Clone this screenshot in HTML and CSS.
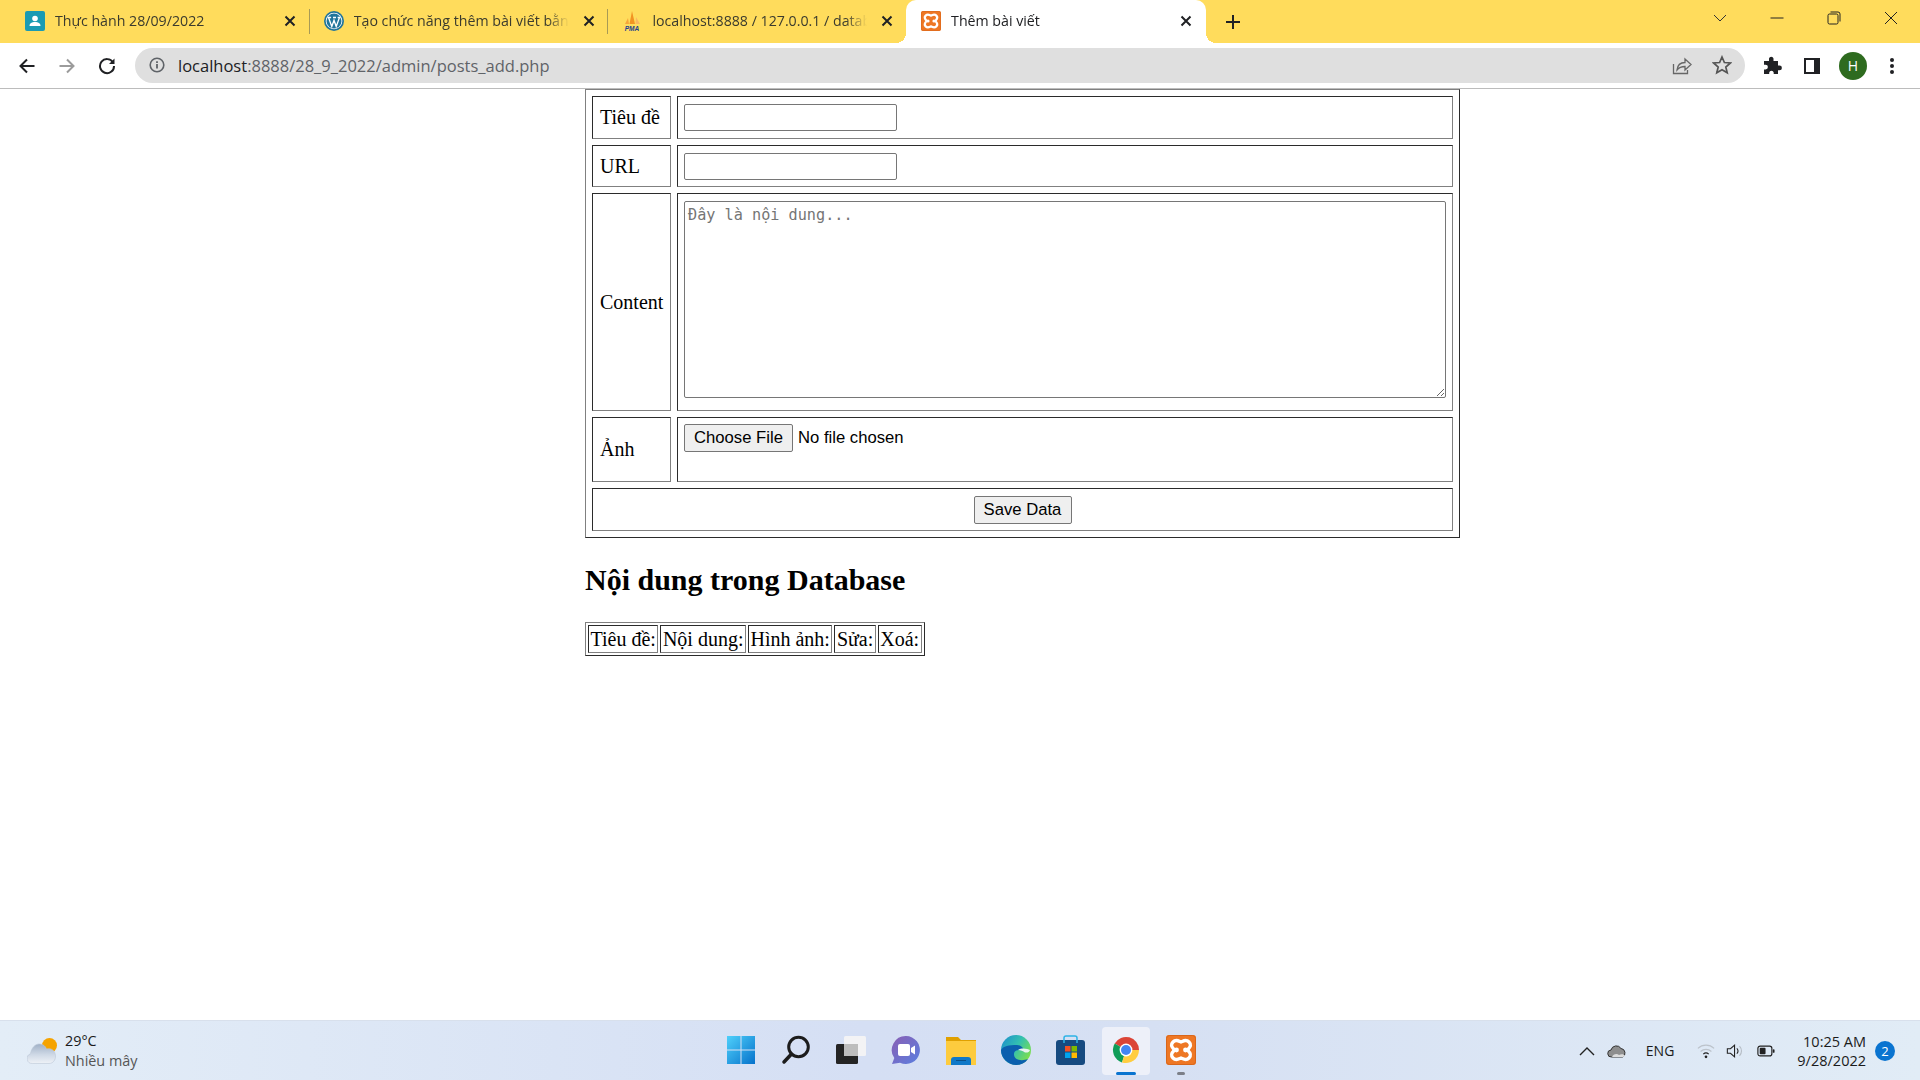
FILE: index.html
```html
<!DOCTYPE html>
<html lang="en">
<head>
    <meta charset="UTF-8">
    <meta name="viewport" content="width=device-width, initial-scale=1.0">
    <title>Thêm bài viết</title>
    <link rel="stylesheet" href="styles.css">
</head>
<body>
    <svg class="defs" width="0" height="0">
        <symbol id="xampp" viewBox="0 0 30 30">
            <rect width="30" height="30" rx="3" fill="#ee7724"/>
            <rect x="0.500" y="0.500" width="29" height="29" rx="3" fill="none" stroke="#d9661a"/>
            <path d="M7 7c3-3 5.500-1 8 0 2.500-1 5-3 8 0 3 3 1 5.500-1.500 8 2.500 2.500 4.500 5 1.500 8-3 3-5.500 1-8 0-2.500 1-5 3-8 0-3-3-1-5.500 1.500-8C6 12.500 4 10 7 7z" fill="#ee7724" stroke="#fff" stroke-width="3.400" stroke-linejoin="round"/>
            <circle cx="10.500" cy="15" r="2.400" fill="#fff"/>
            <circle cx="19.500" cy="15" r="2.400" fill="#fff"/>
        </symbol>
        <symbol id="close" viewBox="0 0 12 12">
            <path d="M1.500 1.500l9 9M10.500 1.500l-9 9" stroke="#202124" stroke-width="2" fill="none"/>
        </symbol>
    </svg>

    <div class="screen">
        <!-- tabs -->
        <div class="tabstrip">
            <div class="tab">
                <svg class="favicon" viewBox="0 0 20 20">
                    <rect width="20" height="20" rx="2" fill="#1a9bb3"/>
                    <circle cx="10" cy="7.500" r="2.800" fill="#fff"/>
                    <path d="M4.500 15c0-3 2.500-4 5.500-4s5.500 1 5.500 4z" fill="#fff"/>
                </svg>
                <span class="tab-title">Thực hành 28/09/2022</span>
                <svg class="tab-close"><use href="#close"/></svg>
            </div>
            <div class="tab tab-sep">
                <svg class="favicon" viewBox="0 0 20 20">
                    <circle cx="10" cy="10" r="10" fill="#21759b"/>
                    <circle cx="10" cy="10" r="8.300" fill="#fff"/>
                    <circle cx="10" cy="10" r="7.500" fill="#21759b"/>
                    <path d="M4.500 6.500l3.300 9 2.200-6.300 2.200 6.300 3.300-9M3.500 6.500h3.600M9 6.500h3M13.600 6.500h2.900" stroke="#fff" stroke-width="1.300" fill="none"/>
                </svg>
                <span class="tab-title">Tạo chức năng thêm bài viết bằng PHP</span>
                <svg class="tab-close"><use href="#close"/></svg>
            </div>
            <div class="tab tab-sep">
                <svg class="favicon" viewBox="0 0 20 20">
                    <path d="M3 13L6 7l1 6z" fill="#f7a63a"/>
                    <path d="M7.500 13L10 0l3 13z" fill="#f29422"/>
                    <path d="M13.500 13L14 6l4 7z" fill="#f9b860"/>
                    <text x="10" y="19.500" class="pma">PMA</text>
                </svg>
                <span class="tab-title">localhost:8888 / 127.0.0.1 / database</span>
                <svg class="tab-close"><use href="#close"/></svg>
            </div>
            <div class="tab tab-active">
                <svg class="favicon"><use href="#xampp"/></svg>
                <span class="tab-title">Thêm bài viết</span>
                <svg class="tab-close"><use href="#close"/></svg>
            </div>
            <svg class="new-tab" viewBox="0 0 16 16">
                <path d="M8 1v14M1 8h14" stroke="#202124" stroke-width="2"/>
            </svg>
            <div class="window-btns">
                <svg class="win-btn" viewBox="0 0 14 8">
                    <path d="M1 1l6 6 6-6" stroke="#333" fill="none"/>
                </svg>
                <svg class="win-btn" viewBox="0 0 14 14">
                    <path d="M0.500 7h13" stroke="#222" stroke-width="1"/>
                </svg>
                <svg class="win-btn" viewBox="0 0 14 14">
                    <rect x="1" y="3" width="10" height="10" rx="1.500" stroke="#222" fill="none"/>
                    <path d="M3.500 1h7.500a2 2 0 0 1 2 2v7.500" stroke="#222" fill="none"/>
                </svg>
                <svg class="win-btn" viewBox="0 0 14 14">
                    <path d="M1 1l12 12M13 1L1 13" stroke="#222" fill="none"/>
                </svg>
            </div>
        </div>

        <!-- address bar -->
        <div class="toolbar">
            <svg class="tool-icon" viewBox="0 0 18 18">
                <path d="M16.500 9H3M9 2.500L2.500 9 9 15.500" stroke="#202124" stroke-width="2" fill="none"/>
            </svg>
            <svg class="tool-icon" viewBox="0 0 18 18">
                <path d="M1.500 9H15M9 2.500L15.500 9 9 15.500" stroke="#9b9b9b" stroke-width="2" fill="none"/>
            </svg>
            <svg class="tool-icon" viewBox="0 0 18 18">
                <path d="M15 5.500A7 7 0 1 0 16 9" stroke="#202124" stroke-width="2" fill="none"/>
                <path d="M16.500 1.500v5.500H11z" fill="#202124"/>
            </svg>
            <div class="omnibox">
                <svg class="info-icon" viewBox="0 0 16 16">
                    <circle cx="8" cy="8" r="6.800" stroke="#5f6368" stroke-width="1.600" fill="none"/>
                    <path d="M8 7v4.500M8 4.200v1.700" stroke="#5f6368" stroke-width="1.800"/>
                </svg>
                <span class="url"><span class="url-host">localhost</span>:8888/28_9_2022/admin/posts_add.php</span>
                <svg class="omni-icon" viewBox="0 0 20 20">
                    <path d="M1.500 9v9.500h14V15" stroke="#666" stroke-width="1.300" fill="none"/>
                    <path d="M5 15c.5-5 4-7.500 8-7.500V4l6 5.500-6 5.500v-3.500c-3.500 0-6 1-8 3.500z" stroke="#666" stroke-width="1.300" fill="none"/>
                </svg>
                <svg class="omni-icon" viewBox="0 0 20 20">
                    <path d="M10 2l2.400 5.500 6 .5-4.600 4 1.400 5.800L10 14.800l-5.200 3 1.400-5.800-4.600-4 6-.5z" stroke="#555" stroke-width="1.700" fill="none"/>
                </svg>
            </div>
            <div class="tool-right">
                <svg class="ext-icon" viewBox="0 0 20 20">
                    <path d="M7 2.500a2.300 2.300 0 0 1 4.500 0V5h4.500v4.500h1.500a2.400 2.400 0 0 1 0 4.800H16V18h-4.300v-1.500a2.300 2.300 0 0 0-4.500 0V18H2v-4.500h1.500a2.400 2.400 0 0 0 0-4.800H2V5h5z" fill="#202124"/>
                </svg>
                <svg class="ext-icon" viewBox="0 0 20 20">
                    <rect x="2" y="2" width="16" height="16" fill="#202124"/>
                    <rect x="4" y="4" width="8" height="12" fill="#fff"/>
                </svg>
                <div class="avatar">H</div>
                <svg class="dots" viewBox="0 0 4 18">
                    <circle cx="2" cy="3" r="2" fill="#202124"/>
                    <circle cx="2" cy="9" r="2" fill="#202124"/>
                    <circle cx="2" cy="15" r="2" fill="#202124"/>
                </svg>
            </div>
        </div>

        <!-- page content -->
        <div class="page">
            <form class="post-form">
                <table class="form-table">
                    <tr class="row-title">
                        <td class="label-cell">Tiêu đề</td>
                        <td><input type="text" class="text-input"></td>
                    </tr>
                    <tr class="row-url">
                        <td class="label-cell">URL</td>
                        <td><input type="text" class="text-input"></td>
                    </tr>
                    <tr class="row-content">
                        <td class="label-cell">Content</td>
                        <td class="top-cell"><textarea class="content-input" placeholder="Đây là nội dung..."></textarea></td>
                    </tr>
                    <tr class="row-image">
                        <td class="label-cell">Ảnh</td>
                        <td class="top-cell"><input type="file" class="file-input"></td>
                    </tr>
                    <tr class="row-save">
                        <td colspan="2" class="save-cell"><input type="submit" class="save-btn" value="Save Data"></td>
                    </tr>
                </table>
            </form>

            <h2 class="db-title">Nội dung trong Database</h2>

            <table class="db-table">
                <tr>
                    <td>Tiêu đề:</td>
                    <td>Nội dung:</td>
                    <td>Hình ảnh:</td>
                    <td>Sửa:</td>
                    <td>Xoá:</td>
                </tr>
            </table>
        </div>

        <!-- windows taskbar -->
        <div class="taskbar">
            <div class="task-left">
                <svg class="weather-icon" viewBox="0 0 30 26">
                    <defs>
                        <linearGradient id="cloud" x1="0" y1="0" x2="0" y2="1">
                            <stop offset="0" stop-color="#9fb0c6"/>
                            <stop offset="0.550" stop-color="#cfd9e6"/>
                            <stop offset="1" stop-color="#eef2f7"/>
                        </linearGradient>
                    </defs>
                    <circle cx="22.500" cy="7.500" r="7.500" fill="#f5a300"/>
                    <path d="M5.500 25.500a5 5 0 0 1-2-9.700C4.500 9.500 8.500 5.500 13 6c3 .3 5.500 2 6.500 5 4.500-1 8.500 1 9 6.500.3 4.500-2.500 8-6.500 8z" fill="url(#cloud)" stroke="#bcc8d6" stroke-width="0.600"/>
                </svg>
                <div class="weather-text">
                    <div class="temp">29°C</div>
                    <div class="weather-desc">Nhiều mây</div>
                </div>
            </div>

            <div class="task-center">
                <div class="task-slot">
                    <svg class="task-icon" viewBox="0 0 30 30">
                        <defs>
                            <linearGradient id="win" x1="0" y1="0" x2="1" y2="1">
                                <stop offset="0" stop-color="#4fd0fb"/>
                                <stop offset="1" stop-color="#0672cb"/>
                            </linearGradient>
                        </defs>
                        <path d="M1 1h13.500v13.500H1zM15.500 1H29v13.500H15.500zM1 15.500h13.500V29H1zM15.500 15.500H29V29H15.500z" fill="url(#win)"/>
                    </svg>
                </div>
                <div class="task-slot">
                    <svg class="task-icon" viewBox="0 0 30 30">
                        <circle cx="17.500" cy="12" r="9.800" stroke="#1c1c1c" stroke-width="3" fill="none"/>
                        <path d="M10.500 19L3 27" stroke="#1c1c1c" stroke-width="3.500" stroke-linecap="round"/>
                    </svg>
                </div>
                <div class="task-slot">
                    <svg class="task-icon" viewBox="0 0 30 30">
                        <rect x="8" y="1" width="22" height="20" rx="1.500" fill="#f3f3f5"/>
                        <rect x="0" y="9" width="22" height="20" rx="1.500" fill="#242424"/>
                        <rect x="8" y="9" width="14" height="12" fill="#bdbdbd"/>
                    </svg>
                </div>
                <div class="task-slot">
                    <svg class="task-icon" viewBox="0 0 30 30">
                        <defs>
                            <linearGradient id="chat" x1="0" y1="0" x2="1" y2="1">
                                <stop offset="0" stop-color="#8a5fb4"/>
                                <stop offset="1" stop-color="#5a7fe0"/>
                            </linearGradient>
                        </defs>
                        <path d="M15 1a14 14 0 1 1-6 26.700L1 29l2.300-6A14 14 0 0 1 15 1z" fill="url(#chat)"/>
                        <rect x="7" y="9" width="12" height="12" rx="2" fill="#fff"/>
                        <path d="M20 13l4-2.500v9L20 17z" fill="#fff"/>
                    </svg>
                </div>
                <div class="task-slot">
                    <svg class="task-icon" viewBox="0 0 30 30">
                        <path d="M0 2h12l3 3h15v5H0z" fill="#e0a000"/>
                        <rect x="0" y="6" width="30" height="24" fill="#fdcb3e"/>
                        <path d="M5 30v-5a3 3 0 0 1 3-3h14a3 3 0 0 1 3 3v5z" fill="#0f78c8"/>
                        <rect x="10" y="25" width="10" height="1" fill="#0a4f88"/>
                    </svg>
                </div>
                <div class="task-slot">
                    <svg class="task-icon" viewBox="0 0 30 30">
                        <defs>
                            <linearGradient id="edge" x1="0" y1="0" x2="1" y2="0.600">
                                <stop offset="0" stop-color="#1a8bd0"/>
                                <stop offset="0.550" stop-color="#33c0b0"/>
                                <stop offset="1" stop-color="#7ade50"/>
                            </linearGradient>
                        </defs>
                        <circle cx="15" cy="15" r="15" fill="url(#edge)"/>
                        <path d="M0 15c0 8 7 15 15 15 5 0 9-2 12-6-5 2-13 2-14-4-.5-3 2-5 5-5 2 0 4 1 5 2 0-4-3-7-7-7C8 10 2 11 0 15z" fill="#0b5fae"/>
                        <path d="M17 15c2 0 5 1 6 2 2 1 5 1 6-2-2-1-8-3-12 0z" fill="#e8f4ee"/>
                    </svg>
                </div>
                <div class="task-slot">
                    <svg class="task-icon" viewBox="0 0 30 30">
                        <rect x="0" y="5" width="29" height="25" rx="3" fill="#164a80"/>
                        <path d="M8 8V3a2 2 0 0 1 2-2h9a2 2 0 0 1 2 2v5" stroke="#2eb3e6" stroke-width="1.500" fill="none"/>
                        <rect x="9" y="11" width="5.500" height="5.500" fill="#f25022"/>
                        <rect x="15.500" y="11" width="5.500" height="5.500" fill="#7fba00"/>
                        <rect x="9" y="17.500" width="5.500" height="5.500" fill="#00a4ef"/>
                        <rect x="15.500" y="17.500" width="5.500" height="5.500" fill="#ffb900"/>
                    </svg>
                </div>
                <div class="task-slot task-slot-active">
                    <svg class="task-icon" viewBox="0 0 30 30">
                        <path d="M15 15L3.700 8.500A13 13 0 0 1 28 15z" fill="#db4437"/>
                        <path d="M15 15L3.700 8.500A13 13 0 0 0 11 27.400z" fill="#0f9d58"/>
                        <path d="M15 15H28A13 13 0 0 1 11 27.400z" fill="#ffcd40"/>
                        <circle cx="15" cy="15" r="6.400" fill="#fff"/>
                        <circle cx="15" cy="15" r="5" fill="#4285f4"/>
                    </svg>
                    <div class="pip pip-blue"></div>
                </div>
                <div class="task-slot">
                    <svg class="task-icon"><use href="#xampp"/></svg>
                    <div class="pip pip-gray"></div>
                </div>
            </div>

            <div class="task-right">
                <svg class="tray-icon" viewBox="0 0 18 18">
                    <path d="M2 13l7-7 7 7" stroke="#222" stroke-width="1.400" fill="none"/>
                </svg>
                <svg class="tray-cloud" viewBox="0 0 20 14">
                    <path d="M4.500 13a3.500 3.500 0 0 1-.5-7 5.500 5.500 0 0 1 10-1.500A4.500 4.500 0 0 1 15.500 13z" fill="#8e8e8e" stroke="#333" stroke-width="1"/>
                    <path d="M5 13c1-3 5-4 7-2 2-1 5-1 6 1l-2 1z" fill="#dcdcdc"/>
                </svg>
                <span class="lang">ENG</span>
                <svg class="tray-icon wifi" viewBox="0 0 20 18">
                    <path d="M1 6a13 13 0 0 1 18 0" stroke="#bcc3cb" stroke-width="1.300" fill="none"/>
                    <path d="M4 9.500a9 9 0 0 1 12 0" stroke="#bcc3cb" stroke-width="1.300" fill="none"/>
                    <path d="M7 12.500a4.500 4.500 0 0 1 6 0" stroke="#222" stroke-width="1.300" fill="none"/>
                    <circle cx="10" cy="15.500" r="1.500" fill="#222"/>
                </svg>
                <svg class="tray-icon speaker" viewBox="0 0 20 18">
                    <path d="M1.500 6.500h3.500l4.500-4v13l-4.500-4H1.500z" stroke="#222" stroke-width="1.200" fill="none"/>
                    <path d="M12 6a4 4 0 0 1 0 6" stroke="#222" stroke-width="1.200" fill="none"/>
                    <path d="M15 3.500a8 8 0 0 1 0 11" stroke="#b5bcc4" stroke-width="1.200" fill="none"/>
                </svg>
                <svg class="tray-icon battery" viewBox="0 0 20 14">
                    <rect x="1" y="1.500" width="15.500" height="11" rx="2.500" stroke="#222" stroke-width="1.300" fill="none"/>
                    <rect x="3" y="3.500" width="6.500" height="7" rx="1" fill="#222"/>
                    <rect x="17.500" y="5" width="2" height="4" rx="1" fill="#222"/>
                </svg>
                <div class="clock">
                    <div>10:25 AM</div>
                    <div>9/28/2022</div>
                </div>
                <div class="notif">2</div>
            </div>
        </div>
    </div>
</body>
</html>
```

FILE: styles.css
```css
/* Basic reset */
* {
    margin: 0;
    padding: 0;
    box-sizing: border-box;
}

body {
    font-family: "Open Sans", "Noto Sans", sans-serif;
    background-color: #fff;
    overflow: hidden;
}

.defs {
    display: block;
    height: 0;
}

.screen {
    display: flex;
    flex-direction: column;
    width: 1920px;
    height: 1080px;
}

/* Tab strip */
.tabstrip {
    display: flex;
    align-items: center;
    height: 43px;
    padding-left: 10px;
    background-color: #ffdc5c;
    flex: none;
}

.tab {
    position: relative;
    display: flex;
    align-items: center;
    width: 298.7px;
    height: 43px;
    padding-left: 15px;
    padding-bottom: 2px;
    color: #3b3b2e;
}

.tab-sep::before {
    content: "";
    position: absolute;
    left: 0;
    top: 9px;
    width: 1px;
    height: 25px;
    background-color: #a89a55;
}

.tab-active {
    width: 300px;
    background-color: #fff;
    border-radius: 10px 10px 0 0;
    color: #202124;
}

.tab-active::before,
.tab-active::after {
    content: "";
    position: absolute;
    bottom: 0;
    width: 10px;
    height: 10px;
}

.tab-active::before {
    left: -10px;
    background: radial-gradient(circle at 0 0, transparent 10px, #fff 10px);
}

.tab-active::after {
    right: -10px;
    background: radial-gradient(circle at 100% 0, transparent 10px, #fff 10px);
}

.favicon {
    width: 20px;
    height: 20px;
    flex: none;
}

.pma {
    font-family: "Liberation Sans", sans-serif;
    font-size: 6.5px;
    font-weight: bold;
    font-style: italic;
    fill: #23408f;
    text-anchor: middle;
}

.tab-title {
    width: 215px;
    margin-left: 10px;
    overflow: hidden;
    white-space: nowrap;
    font-size: 14.2px;
    -webkit-mask-image: linear-gradient(to right, #000 90%, transparent);
    mask-image: linear-gradient(to right, #000 90%, transparent);
}

.tab-close {
    width: 12px;
    height: 12px;
    margin-left: 14px;
    flex: none;
}

.new-tab {
    width: 16px;
    height: 16px;
    margin-left: 19px;
    flex: none;
}

.window-btns {
    display: flex;
    align-items: center;
    margin-left: auto;
    height: 36px;
    align-self: flex-start;
}

.win-btn {
    width: 14px;
    height: 14px;
    margin-right: 43px;
}

.win-btn:last-child {
    margin-right: 22px;
}

/* Address bar */
.toolbar {
    display: flex;
    align-items: center;
    height: 46px;
    padding-left: 18px;
    background-color: #fff;
    border-bottom: 1px solid #bcbcbc;
    flex: none;
}

.tool-icon {
    width: 18px;
    height: 18px;
    margin-right: 22px;
    flex: none;
}

.omnibox {
    display: flex;
    align-items: center;
    width: 1610px;
    height: 35px;
    margin-left: -3px;
    padding-left: 14px;
    background-color: #dfdfdf;
    border-radius: 18px;
    margin-bottom: 1px;
}

.info-icon {
    width: 16px;
    height: 16px;
    flex: none;
}

.url {
    margin-left: 13px;
    font-size: 16.5px;
    color: #5f6368;
    white-space: nowrap;
}

.url-host {
    color: #202124;
}

.omni-icon {
    width: 20px;
    height: 20px;
}

.omni-icon:nth-of-type(2) {
    margin-left: auto;
}

.omni-icon:last-child {
    margin-left: 20px;
    margin-right: 13px;
}

.tool-right {
    display: flex;
    align-items: center;
    margin-left: 17px;
}

.ext-icon {
    width: 20px;
    height: 20px;
    margin-right: 20px;
}

.ext-icon:nth-child(2) {
    margin-right: 17px;
}

.avatar {
    width: 28px;
    height: 28px;
    border-radius: 50%;
    background-color: #2e6b1f;
    color: #fff;
    font-size: 14px;
    line-height: 28px;
    text-align: center;
}

.dots {
    width: 4px;
    height: 18px;
    margin-left: 23px;
}

/* Page */
.page {
    flex: 1;
    padding-left: 585px;
    font-family: "Liberation Serif", serif;
    font-size: 20px;
    color: #000;
}

.form-table {
    width: 875px;
    table-layout: fixed;
    border-collapse: separate;
    border-spacing: 6px;
    border: 1px solid;
    border-color: #808080 #2b2b2b #2b2b2b #808080;
}

.form-table td {
    padding: 6px;
    border: 1px solid;
    border-color: #2b2b2b #808080 #808080 #2b2b2b;
}

.form-table .label-cell {
    width: 79px;
    padding-left: 7px;
}

.top-cell {
    vertical-align: top;
}

.row-title {
    height: 43px;
}

.row-url {
    height: 42px;
}

.row-content {
    height: 218px;
}

.row-image {
    height: 65px;
}

.row-save {
    height: 43px;
}

.text-input {
    display: block;
    width: 213px;
    height: 27px;
    border: 1px solid #767676;
    border-radius: 2px;
}

.content-input {
    display: block;
    width: 762px;
    height: 197px;
    margin-top: 1px;
    padding: 4px 3px;
    font-family: "DejaVu Sans Mono", monospace;
    font-size: 15.2px;
    border: 1px solid #767676;
    border-radius: 2px;
}

.content-input::placeholder {
    color: #757575;
}

.file-input {
    display: block;
    font-family: "Liberation Sans", sans-serif;
    font-size: 16.67px;
}

.file-input::file-selector-button {
    height: 28px;
    width: 109px;
    margin-right: 5px;
    font-family: "Liberation Sans", sans-serif;
    font-size: 16.67px;
    background-color: #efefef;
    border: 1px solid #767676;
    border-radius: 2px;
}

.save-cell {
    text-align: center;
}

.save-btn {
    width: 98px;
    height: 28px;
    font-family: "Liberation Sans", sans-serif;
    font-size: 16.67px;
    background-color: #efefef;
    border: 1px solid #767676;
    border-radius: 2px;
}

.db-title {
    margin: 25px 0;
    font-size: 30px;
    font-weight: bold;
}

.db-table {
    border-collapse: separate;
    border-spacing: 2px;
    border: 1px solid;
    border-color: #808080 #2b2b2b #2b2b2b #808080;
}

.db-table td {
    padding: 2px 1.5px 1px;
    border: 1px solid;
    border-color: #2b2b2b #808080 #808080 #2b2b2b;
}

/* Taskbar */
.taskbar {
    display: flex;
    align-items: center;
    height: 60px;
    background: linear-gradient(to right, #e3edf7, #d5dff4 45%, #d6e0f3 60%, #e1ecf6);
    border-top: 1px solid #d8e0ec;
    flex: none;
}

.task-left {
    display: flex;
    align-items: center;
    flex: 1 1 0;
    padding-left: 27px;
}

.weather-icon {
    width: 30px;
    height: 26px;
    margin-right: 8px;
}

.weather-text {
    font-size: 14.4px;
    line-height: 20px;
    color: #1b1b1b;
}

.weather-desc {
    color: #555;
}

.task-center {
    display: flex;
    gap: 7px;
}

.task-slot {
    position: relative;
    display: flex;
    align-items: center;
    justify-content: center;
    width: 48px;
    height: 48px;
    border-radius: 4px;
}

.task-slot-active {
    background-color: #edf0f9;
}

.task-icon {
    width: 30px;
    height: 30px;
    margin-bottom: 1px;
}

.pip {
    position: absolute;
    bottom: 0;
    left: 50%;
    height: 3px;
    border-radius: 2px;
    transform: translateX(-50%);
}

.pip-blue {
    width: 20px;
    background-color: #0a74d0;
}

.pip-gray {
    width: 8px;
    background-color: #7c7f88;
}

.task-right {
    display: flex;
    align-items: center;
    justify-content: flex-end;
    flex: 1 1 0;
    padding-right: 25px;
    font-size: 14px;
    color: #1b1b1b;
}

.tray-icon {
    width: 18px;
    height: 18px;
}

.tray-cloud {
    width: 20px;
    height: 14px;
    margin-left: 11px;
}

.lang {
    margin-left: 19px;
}

.wifi {
    margin-left: 23px;
}

.speaker {
    margin-left: 11px;
}

.battery {
    margin-left: 13px;
}

.clock {
    margin-left: 22px;
    font-size: 14.5px;
    line-height: 19px;
    text-align: right;
    white-space: nowrap;
}

.notif {
    width: 20px;
    height: 20px;
    margin-left: 9px;
    border-radius: 50%;
    background-color: #0a74d0;
    color: #fff;
    font-size: 13px;
    line-height: 20px;
    text-align: center;
}
```
